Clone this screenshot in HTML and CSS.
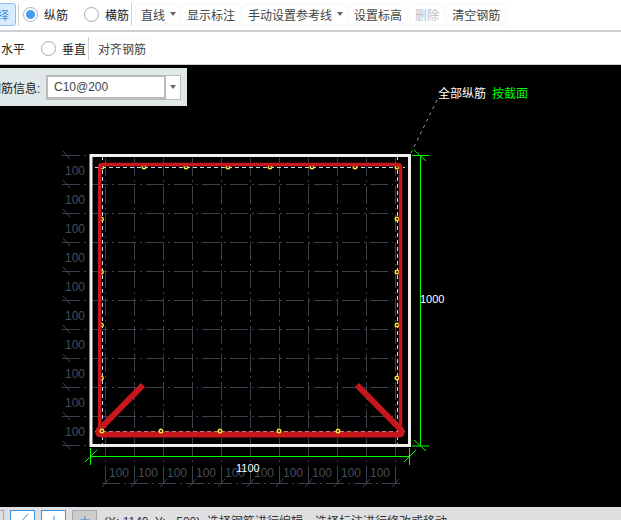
FILE: index.html
```html
<!DOCTYPE html>
<html>
<head>
<meta charset="utf-8" />
<title>钢筋编辑</title>
<link rel="stylesheet" href="styles.css">
</head>
<body>
<div class="page">
	<div class="toolRow rowOne">
		<div class="btn btnOn">选择</div>
		<div class="sep"></div>
		<label class="radio radioOn"><i></i>纵筋</label>
		<label class="radio"><i></i>横筋</label>
		<div class="sep"></div>
		<div class="btn btnArrow">直线<b class="arrow"></b></div>
		<div class="btn">显示标注</div>
		<div class="btn btnArrow">手动设置参考线<b class="arrow"></b></div>
		<div class="btn">设置标高</div>
		<div class="btn btnOff">删除</div>
		<div class="btn">清空钢筋</div>
	</div>
	<div class="toolRow rowTwo">
		<span class="cutLabel">水平</span>
		<label class="radio"><i></i>垂直</label>
		<div class="sep"></div>
		<div class="btn">对齐钢筋</div>
	</div>
	<div class="canvas">
		<svg class="draw" viewBox="0 65 621 442" width="621" height="442">
			<!-- 网格 -->
			<g class="grid">
				<path d="M105 158V487M134 158V487M163 158V487M192 158V487M221 158V487M250 158V487M279 158V487M308 158V487M337 158V487M366 158V487M395 158V487" />
				<path d="M62 155H393M62 184H393M62 213H393M62 242H393M62 271H393M62 300H393M62 329H393M62 358H393M62 387H393M62 416H393M62 445H393" />
				<path d="M102 483H400" />
			</g>
			<g class="tick">
				<path d="M63 151L70 159M63 180L70 188M63 209L70 217M63 238L70 246M63 267L70 275M63 296L70 304M63 325L70 333M63 354L70 362M63 383L70 391M63 412L70 420M63 441L70 449" />
				<path d="M102 487L109 479M131 487L138 479M160 487L167 479M189 487L196 479M218 487L225 479M247 487L254 479M276 487L283 479M305 487L312 479M334 487L341 479M363 487L370 479M392 487L399 479" />
			</g>
			<g class="dimText">
				<text x="65" y="175">100</text><text x="65" y="204">100</text><text x="65" y="233">100</text><text x="65" y="262">100</text><text x="65" y="291">100</text>
				<text x="65" y="320">100</text><text x="65" y="349">100</text><text x="65" y="378">100</text><text x="65" y="407">100</text><text x="65" y="436">100</text>
				<text x="109" y="477">100</text><text x="138" y="477">100</text><text x="167" y="477">100</text><text x="196" y="477">100</text><text x="225" y="477">100</text>
				<text x="254" y="477">100</text><text x="283" y="477">100</text><text x="312" y="477">100</text><text x="341" y="477">100</text><text x="370" y="477">100</text>
			</g>
			<!-- 截面 -->
			<rect class="section" x="91" y="155.5" width="318.5" height="290" />
			<path class="guide" d="M95 167.5H405M102.5 156V446M397.5 156V446M95 431.5H405" />
			<g class="dot">
				<circle cx="102" cy="167" r="1.8" /><circle cx="144" cy="167" r="1.8" /><circle cx="186" cy="167" r="1.8" /><circle cx="228" cy="167" r="1.8" />
				<circle cx="270" cy="167" r="1.8" /><circle cx="312" cy="167" r="1.8" /><circle cx="355" cy="167" r="1.8" /><circle cx="397" cy="167" r="1.8" />
				<circle cx="101.5" cy="219" r="1.8" /><circle cx="101.5" cy="272" r="1.8" /><circle cx="101.5" cy="325" r="1.8" /><circle cx="101.5" cy="378" r="1.8" />
				<circle cx="397" cy="219" r="1.8" /><circle cx="397" cy="272" r="1.8" /><circle cx="397" cy="325" r="1.8" /><circle cx="397" cy="378" r="1.8" />
			</g>
			<path class="rebar" d="M99.7 432V167Q99.7 164.5 102 164.5H398Q400.5 164.5 400.5 167V432" />
			<path class="rebarBold" d="M143 385L99 430Q97 434.5 101 434.5H399Q403 434.5 401 430L357 385" />
			<g class="dot">
				<circle cx="102" cy="431" r="1.8" /><circle cx="161" cy="431" r="1.8" /><circle cx="220" cy="431" r="1.8" />
				<circle cx="279" cy="431" r="1.8" /><circle cx="338" cy="431" r="1.8" />
			</g>
			<!-- 标注 -->
			<path class="leader" d="M411 153L437 100" />
			<path class="green" d="M420.5 155V445M412 155.5H429M414 150L426 161M412 446H429M414 440L426 451M90 456.5H410M90.5 448V465M85 462L97 450M409.5 448V465M404 462L416 450" />
			<text class="dimWhite" x="420" y="303">1000</text>
			<text class="dimWhite" x="236" y="472">1100</text>
			<text class="note" x="438" y="98">全部纵筋</text>
			<text class="noteGreen" x="492" y="98">按截面</text>
		</svg>
		<div class="infoPanel">
			<span class="infoLabel">钢筋信息:</span>
			<div class="combo">
				<div class="comboText">C10@200</div>
				<div class="comboBtn"><b class="arrow"></b></div>
			</div>
		</div>
	</div>
	<div class="status">
		<div class="stBox stEdge"></div>
		<div class="stBox stOn"><svg width="24" height="12"><path d="M9 12L17 3" /></svg></div>
		<div class="stBox stOn"><svg width="24" height="12"><path d="M12 5V12" /></svg></div>
		<div class="stBox stGray"><svg width="24" height="12"><path d="M12 5V12M7 9H17" /></svg></div>
		<span class="stText">(X: 1140&nbsp; Y:&nbsp; -500)&nbsp; 选择钢筋进行编辑，选择标注进行修改或移动</span>
	</div>
</div>
</body>
</html>
```

FILE: styles.css
```css
*{ padding:0; margin:0; box-sizing:border-box;}

html,body{ width:621px; height:520px; overflow:hidden;}
body{ font-family:"Liberation Sans","Noto Sans CJK SC",sans-serif; font-size:12px; color:#333;}

.page{ display:flex; flex-direction:column; width:621px; height:520px; overflow:hidden; background:#fff;}

.toolRow{ display:flex; align-items:center; flex-shrink:0; background:#fff;}
.rowOne{ height:32px; padding-bottom:5px; padding-top:3px; border-bottom:2px solid #ccd0d4;}
.rowTwo{ height:33px; padding-top:1px; border-bottom:1px solid #ccc;}

.btn{ display:flex; align-items:center; height:21px; padding:0 5px; margin-right:1px; border:1px solid #f7f7f7; border-radius:3px; white-space:nowrap; color:#444;}
.btnArrow{ padding-right:3px;}
.btnOn{ height:23px; margin:0 0 0 -22px; padding:0 6px; background:#d9ebff; border-color:#8cc0f5; color:#3e8fdc;}
.btnOff{ color:#bbb;}

.sep{ width:1px; height:23px; margin:0 3px 0 2px; background:#d0d0d0;}

.radio{ display:flex; align-items:center; color:#222;}
.radio i{ display:block; width:15px; height:15px; margin-right:6px; border:1px solid #aaa; border-radius:50%; background:#fff;}
.radioOn{ margin-left:1px;}
.radio + .radio{ margin-left:16px;}
.radioOn i{ border-color:#a8b4c0; background:radial-gradient(circle,#4a9cf0 0,#4a9cf0 4px,#fff 5px);}

.cutLabel{ margin:0 16px 0 1px; color:#222;}

.arrow{ display:inline-block; width:0; height:0; margin-left:5px; border:3px solid transparent; border-top:4px solid #666; border-bottom:0;}

.canvas{ position:relative; flex:1; min-height:0; background:#000;}
.draw{ display:block;}

.infoPanel{ position:absolute; left:0; top:3px; display:flex; align-items:center; width:187px; height:38px; background:#e1e8ea;}
.infoLabel{ margin-left:-11px; width:57px; flex-shrink:0; white-space:nowrap; color:#222;}
.combo{ display:flex; width:135px; height:25px; border:1px solid #bbb; background:#fff;}
.comboText{ flex:1; padding-left:6px; line-height:20px; color:#444; border:1px solid #bbb; border-width:1px 2px 2px 1px;}
.comboBtn{ display:flex; align-items:center; justify-content:center; width:14px;}
.comboBtn .arrow{ margin:0;}

.grid path{ fill:none; stroke:#3a424e; stroke-width:1; stroke-dasharray:18 4 2 4; shape-rendering:crispEdges;}
.tick path{ fill:none; stroke:#3c4552; stroke-width:1;}
.dimText text{ font-size:12px; fill:#454e56;}
.section{ fill:none; stroke:#f0f0f0; stroke-width:3;}
.guide{ fill:none; stroke:#c4dcf2; stroke-width:1; stroke-dasharray:4 3; shape-rendering:crispEdges;}
.dot circle{ fill:#222; stroke:#ffe033; stroke-width:1.4;}
.rebar{ fill:none; stroke:#c8161d; stroke-width:3.5;}
.rebarBold{ fill:none; stroke:#c8161d; stroke-width:6;}
.leader{ fill:none; stroke:#999; stroke-width:1; stroke-dasharray:3 4;}
.green{ fill:none; stroke:#00ff00; stroke-width:1;}
.dimWhite{ font-size:11px; fill:#fff;}
.note{ font-size:12px; fill:#fff;}
.noteGreen{ font-size:12px; fill:#00ff00;}

.status{ display:flex; align-items:flex-start; flex-shrink:0; height:13px; padding-top:3px; background:#dfdfe1; overflow:hidden;}
.stBox{ flex-shrink:0; width:25px; height:20px; margin-right:6px; border:1px solid #a9a9a9;}
.stBox svg{ display:block; fill:none; stroke:#3b8fe0;}
.stEdge{ width:4px; border-left:0;}
.stOn{ background:#fff; border-color:#3b93e6;}
.stGray{ background:#ccc;}
.stText{ margin:5px 0 0 1px; line-height:14px; white-space:nowrap; color:#333;}
```
